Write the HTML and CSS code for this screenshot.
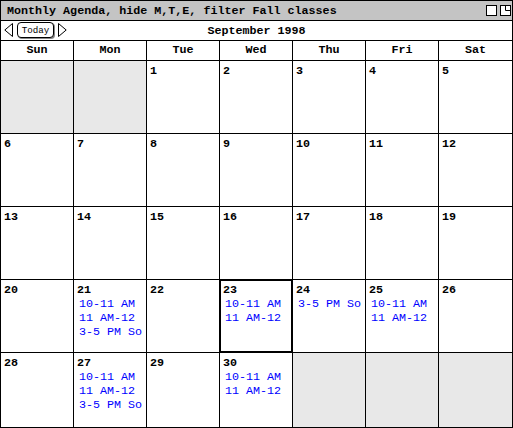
FILE: index.html
```html
<!DOCTYPE html>
<html lang="en">
<head>
    <meta charset="UTF-8">
    <title>Monthly Agenda</title>
    <link rel="stylesheet" href="styles.css">
</head>
<body>
    <div class="window">
        <div class="titlebar">
            <span class="title">Monthly Agenda, hide M,T,E, filter Fall classes</span>
            <span class="win-btns">
                <svg width="11" height="11" viewBox="0 0 11 11"><rect x="0.5" y="0.5" width="10" height="10" fill="#fff" stroke="#000"/></svg>
                <svg width="11" height="11" viewBox="0 0 11 11"><rect x="0.5" y="0.5" width="10" height="10" fill="#fff" stroke="#000"/><path d="M5.5 0.5 V5.5 H10.5" fill="none" stroke="#000"/></svg>
            </span>
        </div>

        <div class="nav">
            <div class="nav-left">
                <svg class="arrow" width="9" height="14" viewBox="0 0 9 14"><path d="M8.5 0.5 L0.8 7 L8.5 13.5 Z" fill="#fff" stroke="#000"/></svg>
                <button class="today">Today</button>
                <svg class="arrow" width="9" height="14" viewBox="0 0 9 14"><path d="M0.5 0.5 L8.2 7 L0.5 13.5 Z" fill="#fff" stroke="#000"/></svg>
            </div>
            <div class="month">September 1998</div>
        </div>

        <div class="cal">
            <div class="dow">Sun</div>
            <div class="dow">Mon</div>
            <div class="dow">Tue</div>
            <div class="dow">Wed</div>
            <div class="dow">Thu</div>
            <div class="dow">Fri</div>
            <div class="dow">Sat</div>

            <div class="day empty"></div>
            <div class="day empty"></div>
            <div class="day"><div class="num">1</div></div>
            <div class="day"><div class="num">2</div></div>
            <div class="day"><div class="num">3</div></div>
            <div class="day"><div class="num">4</div></div>
            <div class="day"><div class="num">5</div></div>

            <div class="day"><div class="num">6</div></div>
            <div class="day"><div class="num">7</div></div>
            <div class="day"><div class="num">8</div></div>
            <div class="day"><div class="num">9</div></div>
            <div class="day"><div class="num">10</div></div>
            <div class="day"><div class="num">11</div></div>
            <div class="day"><div class="num">12</div></div>

            <div class="day"><div class="num">13</div></div>
            <div class="day"><div class="num">14</div></div>
            <div class="day"><div class="num">15</div></div>
            <div class="day"><div class="num">16</div></div>
            <div class="day"><div class="num">17</div></div>
            <div class="day"><div class="num">18</div></div>
            <div class="day"><div class="num">19</div></div>

            <div class="day"><div class="num">20</div></div>
            <div class="day">
                <div class="num">21</div>
                <div class="ev">10-11 AM</div>
                <div class="ev">11 AM-12</div>
                <div class="ev">3-5 PM So</div>
            </div>
            <div class="day"><div class="num">22</div></div>
            <div class="day today-cell">
                <div class="num">23</div>
                <div class="ev">10-11 AM</div>
                <div class="ev">11 AM-12</div>
            </div>
            <div class="day">
                <div class="num">24</div>
                <div class="ev">3-5 PM So</div>
            </div>
            <div class="day">
                <div class="num">25</div>
                <div class="ev">10-11 AM</div>
                <div class="ev">11 AM-12</div>
            </div>
            <div class="day"><div class="num">26</div></div>

            <div class="day"><div class="num">28</div></div>
            <div class="day">
                <div class="num">27</div>
                <div class="ev">10-11 AM</div>
                <div class="ev">11 AM-12</div>
                <div class="ev">3-5 PM So</div>
            </div>
            <div class="day"><div class="num">29</div></div>
            <div class="day">
                <div class="num">30</div>
                <div class="ev">10-11 AM</div>
                <div class="ev">11 AM-12</div>
            </div>
            <div class="day empty"></div>
            <div class="day empty"></div>
            <div class="day empty"></div>
        </div>
    </div>
</body>
</html>
```

FILE: styles.css
```css
body {
    margin: 0;
    background: white;
    font-family: "Liberation Mono", "DejaVu Sans Mono", monospace;
    font-size: 11.7px;
}
.window {
    width: 513px;
    height: 428px;
    box-sizing: border-box;
    border: 1px solid black;
    display: flex;
    flex-direction: column;
}
.titlebar {
    height: 19px;
    border-bottom: 1px solid black;
    background: #c4c4c4;
    display: flex;
    align-items: center;
    justify-content: space-between;
    padding: 0 1px 0 6px;
}
.title {
    font-weight: bold;
}
.win-btns {
    display: flex;
    gap: 3px;
}
.win-btns svg {
    display: block;
}
.nav {
    height: 19px;
    border-bottom: 1px solid black;
    position: relative;
    display: flex;
    align-items: center;
    justify-content: center;
}
.nav-left {
    position: absolute;
    left: 3px;
    top: 1px;
    display: flex;
    align-items: center;
    gap: 4px;
}
.arrow {
    display: block;
}
.today {
    font-family: "Liberation Mono", monospace;
    font-size: 9.2px;
    height: 16px;
    width: 37px;
    padding: 0;
    margin: 0;
    background: white;
    color: black;
    border: 1px solid black;
    border-radius: 4px;
    box-shadow: 1px 1px 0 #888;
}
.month {
    font-weight: bold;
}
.cal {
    flex: 1;
    display: grid;
    grid-template-columns: repeat(6, 72px) 73px;
    grid-template-rows: 19px repeat(4, 72px) 74px;
    gap: 1px;
    background: black;
}
.dow {
    background: white;
    font-weight: bold;
    text-align: center;
    line-height: 19px;
}
.day {
    background: white;
    padding: 4px 0 0 3px;
    overflow: hidden;
    white-space: nowrap;
}
.day.empty {
    background: #e8e8e8;
}
.today-cell {
    box-shadow: inset 0 0 0 1px black;
}
.num {
    font-weight: bold;
    line-height: 13px;
}
.ev {
    color: #0000ff;
    line-height: 14px;
    padding-left: 2px;
}
```
